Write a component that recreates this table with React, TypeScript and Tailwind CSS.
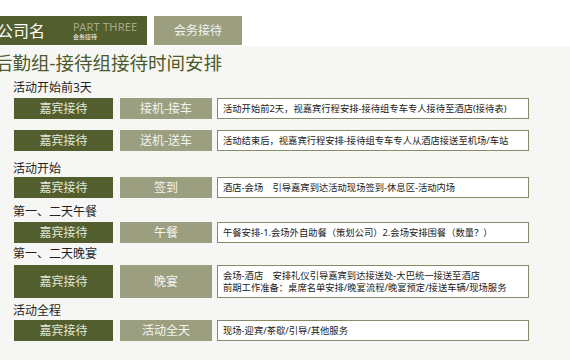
import type { ReactNode } from "react";

const font = { fontFamily: '"Noto Sans", "Noto Sans CJK SC", sans-serif' };

type Row = {
  label: string;
  action: string;
  detail: ReactNode;
  tall?: boolean;
  labelGap: string;
  rowGap: string;
};

const rows: Row[] = [
  {
    label: "活动开始前3天",
    action: "接机-接车",
    detail: "活动开始前2天，视嘉宾行程安排-接待组专车专人接待至酒店(接待表)",
    labelGap: "mt-[6px]",
    rowGap: "mt-[3px]",
  },
  {
    label: "",
    action: "送机-送车",
    detail: "活动结束后，视嘉宾行程安排-接待组专车专人从酒店接送至机场/车站",
    labelGap: "",
    rowGap: "mt-[11px]",
  },
  {
    label: "活动开始",
    action: "签到",
    detail: "酒店-会场　引导嘉宾到达活动现场签到-休息区-活动内场",
    labelGap: "mt-[11px]",
    rowGap: "mt-[1px]",
  },
  {
    label: "第一、二天午餐",
    action: "午餐",
    detail: "午餐安排-1.会场外自助餐（策划公司）2.会场安排围餐（数量？）",
    labelGap: "mt-[7px]",
    rowGap: "mt-[3px]",
  },
  {
    label: "第一、二天晚宴",
    action: "晚宴",
    detail: (
      <>
        会场-酒店　安排礼仪引导嘉宾到达接送处-大巴统一接送至酒店
        <br />
        前期工作准备：桌席名单安排/晚宴流程/晚宴预定/接送车辆/现场服务
      </>
    ),
    tall: true,
    labelGap: "mt-[4px]",
    rowGap: "mt-[4px]",
  },
  {
    label: "活动全程",
    action: "活动全天",
    detail: "现场-迎宾/茶歇/引导/其他服务",
    labelGap: "mt-[6px]",
    rowGap: "mt-[2px]",
  },
];

function ScheduleRow({ row }: { row: Row }) {
  const h = row.tall ? "h-[33px]" : "h-[21px]";
  return (
    <>
      {row.label && (
        <div className={`${row.labelGap} ml-[13px] h-[14px] text-[12px] leading-[14px] text-[#1f1f1f]`}>
          {row.label}
        </div>
      )}
      <div className={`${row.rowGap} ml-[14px] flex ${h}`}>
        <div className="flex w-[99px] items-center justify-center bg-[#535e2e] text-[12px] text-[#e4e7d8]">
          嘉宾接待
        </div>
        <div className="ml-[7px] flex w-[92px] items-center justify-center bg-[#9b9f80] text-[12px] text-[#f5f5ee]">
          {row.action}
        </div>
        <div className="ml-[5px] flex w-[312px] items-center border border-[#868b68] bg-white pl-[5px] text-[9.3px] leading-[12px] text-[#222]">
          <div>{row.detail}</div>
        </div>
      </div>
    </>
  );
}

export default function App() {
  return (
    <div className="h-[360px] w-[570px] overflow-hidden bg-white" style={font}>
      <header className="flex h-[46px] pt-[16px]">
        <div className="flex h-[29px] w-[147px] items-center bg-[#535e2e]">
          <span className="ml-[-3px] text-[16px] leading-none text-white">公司名</span>
          <div className="ml-[28px] flex flex-col">
            <span className="text-[11px] leading-[12px] tracking-[0.2px] text-[#a5aa8c]">PART THREE</span>
            <span className="mt-[1px] text-[6px] leading-[7px] text-white">会务接待</span>
          </div>
        </div>
        <div className="ml-[7px] flex h-[29px] w-[88px] items-center justify-center bg-[#9b9f80] text-[12px] text-[#f2f2ea]">
          会务接待
        </div>
      </header>

      <section className="flex h-[314px] flex-col bg-[#f6f6f4]">
        <h1 className="ml-[-6px] mt-[5px] text-[18.5px] leading-[24px] font-normal text-[#4d5a2a]">
          后勤组-接待组接待时间安排
        </h1>
        {rows.map((row) => (
          <ScheduleRow key={row.action} row={row} />
        ))}
      </section>
    </div>
  );
}
